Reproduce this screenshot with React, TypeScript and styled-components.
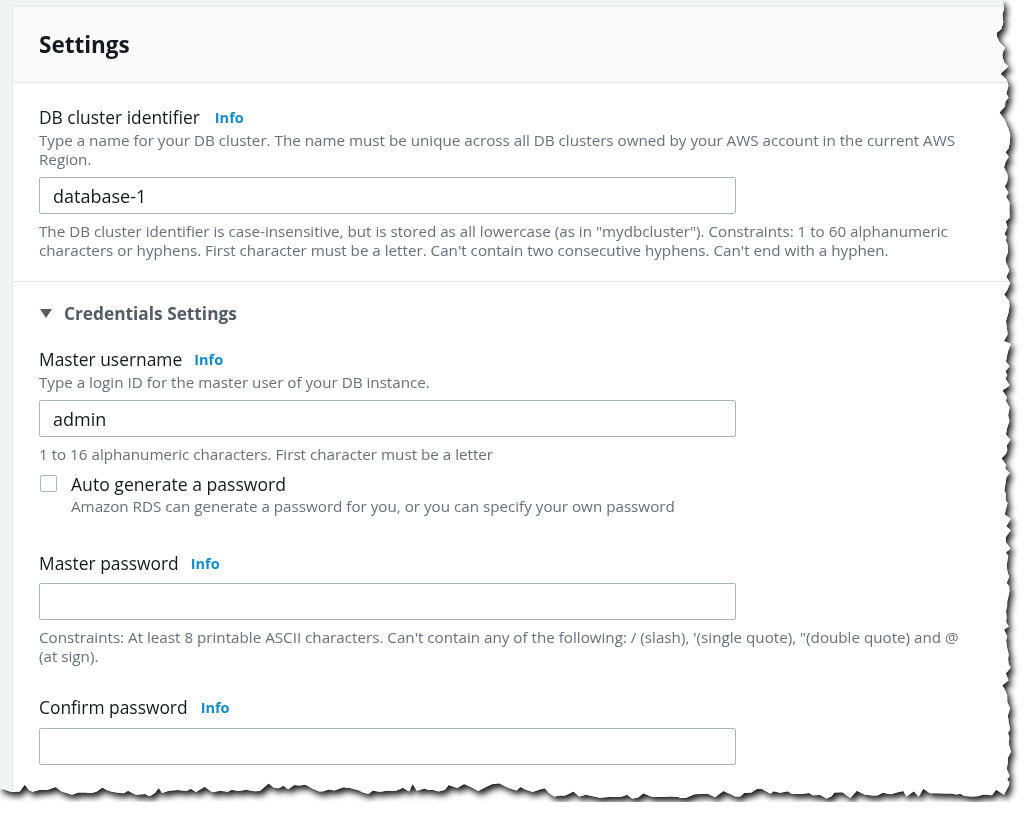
import React from "react";
import styled, { createGlobalStyle } from "styled-components";

const Global = createGlobalStyle`
  html, body { margin: 0; padding: 0; background: #ffffff; }
  body { font-family: "Open Sans", "Liberation Sans", Arial, sans-serif; }
  * { box-sizing: border-box; }
`;

const PAPER_W = 1014;
const PAPER_H = 802;

function makeTear(): string {
  let seed = 11;
  const rnd = () => {
    seed = (seed * 16807) % 2147483647;
    return (seed - 1) / 2147483646;
  };
  const pts: string[] = ["0px 0px"];
  let wob = 0;
  for (let y = 0; y <= PAPER_H - 14; y += 3 + rnd() * 5) {
    wob = Math.max(-5, Math.min(5, wob + (rnd() - 0.5) * 3.5));
    const x = PAPER_W - 8 + wob - rnd() * 5 - (rnd() < 0.12 ? 3 : 0);
    pts.push(`${x.toFixed(1)}px ${y.toFixed(1)}px`);
  }
  wob = 0;
  for (let x = PAPER_W - 10; x >= 0; x -= 3 + rnd() * 6) {
    wob = Math.max(-4, Math.min(4, wob + (rnd() - 0.5) * 3));
    const y = PAPER_H - 11 + wob + rnd() * 4 - (rnd() < 0.18 ? 4 : 0);
    pts.push(`${x.toFixed(1)}px ${y.toFixed(1)}px`);
  }
  pts.push(`0px ${PAPER_H - 12}px`);
  return `polygon(${pts.join(", ")})`;
}

const TEAR = makeTear();

const Shadow = styled.div`
  width: ${PAPER_W}px;
  filter: drop-shadow(3px 4px 3px rgba(0, 0, 0, 0.9));
`;

const Paper = styled.div<{ $clip: string }>`
  width: ${PAPER_W}px;
  height: ${PAPER_H}px;
  overflow: hidden;
  background: #f2f3f3;
  padding: 6px 0 0 12px;
  clip-path: ${(p) => p.$clip};
`;

const Panel = styled.section`
  width: 1020px;
  height: 820px;
  background: #ffffff;
  border: 1px solid #e3e6e6;
`;

const PanelHeader = styled.header`
  height: 76px;
  background: #fafafa;
  border-bottom: 1px solid #e3e6e6;
  display: flex;
  align-items: center;
  padding: 0 26px 0;
`;

const Title = styled.h2`
  margin: 0;
  font-size: 22.5px;
  line-height: 30px;
  font-weight: 700;
  color: #16191f;
`;

const Section = styled.div<{ $divider?: boolean; $pt: number; $pb: number }>`
  padding: ${(p) => p.$pt}px 26px ${(p) => p.$pb}px;
  border-bottom: ${(p) => (p.$divider ? "1px solid #e3e6e6" : "none")};
  width: 1000px;
`;

const Field = styled.div<{ $mt?: number }>`
  margin-top: ${(p) => p.$mt ?? 0}px;
`;

const LabelRow = styled.div<{ $gap?: number }>`
  display: flex;
  align-items: center;
  gap: ${(p) => p.$gap ?? 13}px;
  height: 29px;
`;

const Label = styled.span`
  font-size: 17.4px;
  line-height: 24px;
  color: #16191f;
`;

const Info = styled.a`
  font-size: 14.5px;
  line-height: 24px;
  font-weight: 700;
  color: #138bc6;
  text-decoration: none;
  padding-top: 2px;
`;

const Desc = styled.div`
  font-size: 15.2px;
  line-height: 19px;
  color: #687078;
  width: 940px;
`;

const Input = styled.div`
  width: 697px;
  height: 37px;
  border: 1px solid #aab7b8;
  border-radius: 2px;
  display: flex;
  align-items: center;
  padding: 0 13px;
  font-size: 18px;
  color: #16191f;
  background: #fff;
`;

const Expander = styled.div`
  display: flex;
  align-items: center;
  gap: 12px;
  font-size: 17.3px;
  font-weight: 700;
  color: #545b64;
  height: 24px;
`;

const Caret = styled.span`
  width: 0;
  height: 0;
  border-left: 6px solid transparent;
  border-right: 6px solid transparent;
  border-top: 9px solid #545b64;
  margin-left: 1px;
`;

const CheckRow = styled.div`
  display: flex;
  gap: 14px;
  align-items: flex-start;
`;

const Box = styled.span`
  width: 17px;
  height: 17px;
  margin-top: 3px;
  margin-left: 1px;
  border: 1px solid #aab7b8;
  border-radius: 2px;
  background: #fff;
  flex: none;
`;

const CheckText = styled.div`
  display: flex;
  flex-direction: column;
`;

const CheckLabel = styled.span`
  font-size: 17.6px;
  line-height: 25px;
  color: #16191f;
`;

export default function App() {
  return (
    <>
      <Global />
      <Shadow>
        <Paper $clip={TEAR}>
          <Panel>
            <PanelHeader>
              <Title>Settings</Title>
            </PanelHeader>
            <Section $divider $pt={19} $pb={21}>
              <LabelRow $gap={15}>
                <Label>DB cluster identifier</Label>
                <Info>Info</Info>
              </LabelRow>
              <Desc>
                Type a name for your DB cluster. The name must be unique across all DB clusters owned by your AWS
                account in the current AWS Region.
              </Desc>
              <Field $mt={8}>
                <Input>database-1</Input>
              </Field>
              <Field $mt={8}>
                <Desc>
                  The DB cluster identifier is case-insensitive, but is stored as all lowercase (as in "mydbcluster").
                  Constraints: 1 to 60 alphanumeric characters or hyphens. First character must be a letter. Can't
                  contain two consecutive hyphens. Can't end with a hyphen.
                </Desc>
              </Field>
            </Section>
            <Section $pt={19} $pb={20}>
              <Expander>
                <Caret />
                Credentials Settings
              </Expander>
              <Field $mt={19}>
                <LabelRow $gap={12}>
                  <Label>Master username</Label>
                  <Info>Info</Info>
                </LabelRow>
                <Desc>Type a login ID for the master user of your DB instance.</Desc>
                <Field $mt={8}>
                  <Input>admin</Input>
                </Field>
                <Field $mt={8}>
                  <Desc>1 to 16 alphanumeric characters. First character must be a letter</Desc>
                </Field>
                <Field $mt={8}>
                  <CheckRow>
                    <Box />
                    <CheckText>
                      <CheckLabel>Auto generate a password</CheckLabel>
                      <Desc>Amazon RDS can generate a password for you, or you can specify your own password</Desc>
                    </CheckText>
                  </CheckRow>
                </Field>
              </Field>
              <Field $mt={32}>
                <LabelRow $gap={12}>
                  <Label>Master password</Label>
                  <Info>Info</Info>
                </LabelRow>
                <Field $mt={6}>
                  <Input />
                </Field>
                <Field $mt={8}>
                  <Desc>
                    Constraints: At least 8 printable ASCII characters. Can't contain any of the following: / (slash),
                    '(single quote), "(double quote) and @ (at sign).
                  </Desc>
                </Field>
              </Field>
              <Field $mt={26}>
                <LabelRow>
                  <Label>Confirm password</Label>
                  <Info>Info</Info>
                </LabelRow>
                <Field $mt={7}>
                  <Input />
                </Field>
              </Field>
            </Section>
          </Panel>
        </Paper>
      </Shadow>
    </>
  );
}
